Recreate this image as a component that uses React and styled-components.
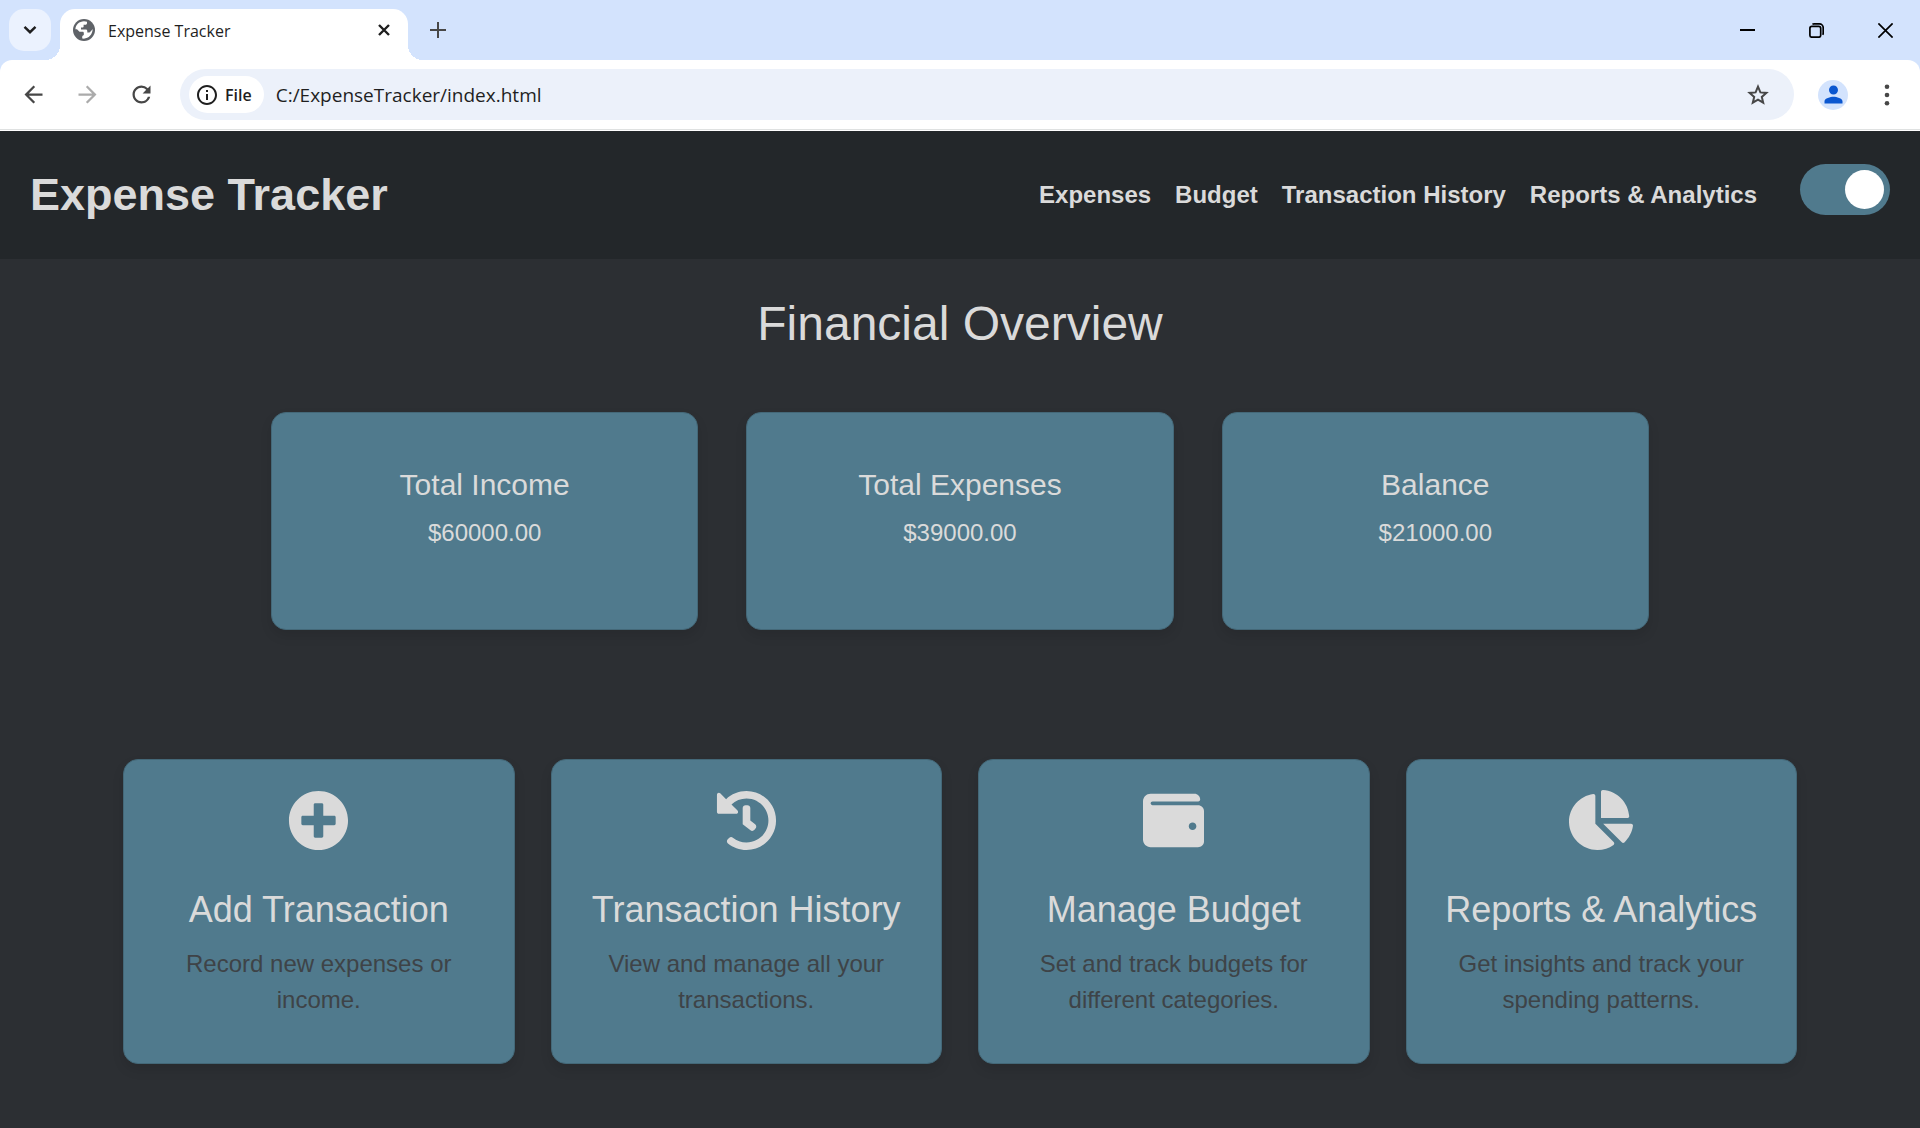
import React, { useState } from "react";
import styled, { createGlobalStyle } from "styled-components";
import { FaPlusCircle, FaHistory, FaWallet, FaChartPie } from "react-icons/fa";
import {
  MdArrowBack,
  MdArrowForward,
  MdRefresh,
  MdOutlineInfo,
  MdPerson,
} from "react-icons/md";

const GlobalStyle = createGlobalStyle`
  *, *::before, *::after { box-sizing: border-box; }
  body {
    margin: 0;
    background: #2c2f33;
    font-family: "Liberation Sans", Arial, sans-serif;
  }
  h1, h2, h3, p { margin: 0; }
`;

const Window = styled.div`
  min-height: 100vh;
  display: flex;
  flex-direction: column;
`;

/* Browser chrome */

const Chrome = styled.div`
  background: #d3e3fd;
  color: #1f1f1f;
  font-family: "Open Sans", "Noto Sans", sans-serif;
`;

const PlainButton = styled.button`
  display: flex;
  align-items: center;
  justify-content: center;
  flex: none;
  padding: 0;
  border: 0;
  background: transparent;
  color: ${(p) => p.$color || "#474747"};
  cursor: pointer;
`;

const TabStrip = styled.div`
  display: flex;
  align-items: center;
  height: 60px;
  padding-left: 9px;
`;

const TabSearch = styled(PlainButton)`
  width: 42px;
  height: 42px;
  border-radius: 15px;
  background: #ebf2fe;
`;

const Tab = styled.div`
  position: relative;
  display: flex;
  align-items: center;
  align-self: flex-end;
  gap: 13px;
  width: 348px;
  height: 51px;
  margin-left: 9px;
  padding: 0 15px 9px 13px;
  border-radius: 15px 15px 0 0;
  background: #fff;

  &::before,
  &::after {
    content: "";
    position: absolute;
    bottom: 0;
    width: 15px;
    height: 15px;
  }
  &::before {
    right: 100%;
    background: radial-gradient(circle at 0 0, transparent 15px, #fff 15px);
  }
  &::after {
    left: 100%;
    background: radial-gradient(circle at 100% 0, transparent 15px, #fff 15px);
  }
`;

const TabTitle = styled.span`
  flex: 1;
  padding-top: 2px;
  font-size: 16px;
  line-height: 24px;
`;

const TabClose = styled(PlainButton)`
  width: 18px;
  height: 24px;
`;

const NewTab = styled(PlainButton)`
  width: 30px;
  height: 42px;
  margin-left: 15px;
`;

const WindowControls = styled.div`
  display: flex;
  margin-left: auto;
`;

const WindowButton = styled(PlainButton)`
  width: 69px;
  height: 60px;
`;

const Toolbar = styled.div`
  display: flex;
  align-items: center;
  height: 71px;
  padding: 0 6px 2px;
  border-radius: 12px 12px 0 0;
  background: linear-gradient(#fff 69px, #dfe1e1 69px, #dfe1e1 70px, #fff 70px);
`;

const ToolButton = styled(PlainButton)`
  width: 54px;
  height: 51px;
`;

const AddressBar = styled.div`
  display: flex;
  align-items: center;
  flex: 1;
  height: 51px;
  margin: 0 12px;
  padding: 0 9px;
  border-radius: 26px;
  background: #ecf1fa;
`;

const SiteChip = styled(PlainButton)`
  gap: 6px;
  height: 37px;
  padding: 0 12px 0 6px;
  border-radius: 19px;
  background: #fff;
  font-family: inherit;
  font-size: 16px;
  font-weight: 600;
`;

const AddressInput = styled.input`
  flex: 1;
  min-width: 0;
  height: 37px;
  padding: 0 12px;
  border: 0;
  outline: 0;
  background: transparent;
  color: #1f1f1f;
  font-family: inherit;
  font-size: 19px;
`;

const Avatar = styled.span`
  display: flex;
  align-items: center;
  justify-content: center;
  width: 30px;
  height: 30px;
  border-radius: 50%;
  background: #d3e3fd;
`;

/* Page */

const Header = styled.header`
  display: flex;
  align-items: center;
  justify-content: space-between;
  min-height: 128px;
  padding: 0 30px;
  background: #23272a;
  color: #dadada;
`;

const Brand = styled.h1`
  font-size: 45px;
  line-height: 54px;
`;

const HeaderEnd = styled.div`
  display: flex;
  align-items: center;
`;

const Nav = styled.nav`
  display: flex;
  gap: 24px;
  margin-right: 43px;
`;

const NavLink = styled.a`
  color: inherit;
  font-size: 24px;
  font-weight: 700;
  line-height: 36px;
  text-decoration: none;
`;

const Switch = styled.input`
  appearance: none;
  width: 90px;
  height: 51px;
  margin: 0 0 12px;
  padding: 6px;
  border-radius: 26px;
  background: ${(p) => (p.checked ? "#507a8d" : "#cccccc")};
  cursor: pointer;

  &::before {
    content: "";
    display: block;
    width: 39px;
    height: 39px;
    margin-left: ${(p) => (p.checked ? "39px" : "0")};
    border-radius: 50%;
    background: #fff;
  }
`;

const Main = styled.main`
  flex: 1;
  padding: 36px 48px 64px;
  color: #dadada;
  text-align: center;
`;

const PageTitle = styled.h2`
  font-size: 48px;
  font-weight: 400;
  line-height: 58px;
`;

const CardRow = styled.section`
  display: grid;
  grid-template-columns: repeat(${(p) => p.$columns}, minmax(0, 1fr));
  gap: ${(p) => p.$gap};
  max-width: ${(p) => p.$max};
  margin: ${(p) => p.$top} auto 0;
`;

const Card = styled.article`
  display: flex;
  flex-direction: column;
  align-items: center;
  border: 1px solid #446878;
  border-radius: 15px;
  background: #507a8d;
  box-shadow: 0 6px 12px rgba(0, 0, 0, 0.1);
`;

const SummaryCard = styled(Card)`
  min-height: 218px;
  padding: 54px 24px 48px;
`;

const SummaryLabel = styled.h3`
  font-size: 30px;
  font-weight: 400;
  line-height: 36px;
`;

const SummaryValue = styled.p`
  margin-top: 12px;
  font-size: 24px;
  line-height: 36px;
`;

const ActionCard = styled(Card)`
  min-height: 305px;
  padding: 28px 24px 43px;
`;

const IconSlot = styled.div`
  display: flex;
  align-items: center;
  height: 64px;

  svg {
    width: auto;
    height: ${(p) => p.$size}px;
  }
`;

const ActionTitle = styled.h3`
  margin-top: 36px;
  font-size: 36px;
  font-weight: 400;
  line-height: 43px;
`;

const ActionText = styled.p`
  max-width: 300px;
  margin-top: 15px;
  color: #3e4347;
  font-size: 24px;
  line-height: 36px;
`;

const GlobeIcon = () => (
  <svg width="22" height="22" viewBox="0 0 22 22" aria-hidden="true">
    <circle cx="11" cy="11" r="11" fill="#5f6368" />
    <path
      d="M2.4 10.2C2.7 5.6 6.3 2.3 11 2.2c1.1 0 2.100.2 3 .5v1.500c0 .9-.7 1.500-1.600 1.500H10.600v1.700c0 .7-.5 1.200-1.200 1.200H8v2h4.800c.9 0 1.500.6 1.500 1.500v1.500h1.500c.7 0 1.400-.6 1.700-1.200.9-.5 1.600-1.400 2.200-2.300C19.400 15.600 15.800 19.400 10.800 19.700c-.6 0-1.100 0-1.600-.1v-1.700c0-.9.7-1.600 1.600-1.600v-2.300c0-.7-.5-1.200-1.200-1.200H6.500L4 10.200Z"
      fill="#fff"
    />
  </svg>
);

const StarIcon = () => (
  <svg width="24" height="24" viewBox="0 0 24 24" fill="none" stroke="currentColor" strokeWidth="2" aria-hidden="true">
    <path d="M12 3.700 14.400 9.400 20.400 9.900 15.800 13.900 17.200 19.700 12 16.600 6.800 19.700 8.200 13.900 3.600 9.900 9.600 9.400Z" />
  </svg>
);

const ChevronIcon = () => (
  <svg width="14" height="10" viewBox="0 0 14 10" fill="none" stroke="#1f1f1f" strokeWidth="2.4" aria-hidden="true">
    <path d="M1.5 1.8 7 7.2 12.5 1.8" />
  </svg>
);

const CloseIcon = () => (
  <svg width="12" height="12" viewBox="0 0 12 12" stroke="#1f1f1f" strokeWidth="2.4" aria-hidden="true">
    <path d="M1 1 11 11M11 1 1 11" />
  </svg>
);

const PlusIcon = () => (
  <svg width="16" height="16" viewBox="0 0 16 16" stroke="#474747" strokeWidth="2" aria-hidden="true">
    <path d="M8 0V16M0 8H16" />
  </svg>
);

const MinimizeIcon = () => (
  <svg width="15" height="15" viewBox="0 0 15 15" aria-hidden="true">
    <path d="M0 6H15V8H0Z" fill="#000" />
  </svg>
);

const RestoreIcon = () => (
  <svg width="15" height="15" viewBox="0 0 15 15" fill="none" stroke="#000" strokeWidth="1.7" aria-hidden="true">
    <rect x="0.9" y="3.4" width="10.8" height="10.8" rx="2" />
    <path d="M3.4 1.2C4 .9 4.4.9 5 .9H10.4A3.8 3.8 0 0 1 14.2 4.7V10C14.2 10.8 14 11.3 13.6 11.8" />
  </svg>
);

const WindowCloseIcon = () => (
  <svg width="15" height="15" viewBox="0 0 15 15" stroke="#000" strokeWidth="1.7" aria-hidden="true">
    <path d="M.4.4 14.6 14.6M14.6.4.4 14.6" />
  </svg>
);

const MoreIcon = () => (
  <svg width="6" height="22" viewBox="0 0 6 22" fill="#474747" aria-hidden="true">
    <circle cx="3" cy="2.7" r="2.3" />
    <circle cx="3" cy="11" r="2.3" />
    <circle cx="3" cy="19.3" r="2.3" />
  </svg>
);

const navLinks = ["Expenses", "Budget", "Transaction History", "Reports & Analytics"];

const summary = [
  { label: "Total Income", value: "$60000.00" },
  { label: "Total Expenses", value: "$39000.00" },
  { label: "Balance", value: "$21000.00" },
];

const actions = [
  { Icon: FaPlusCircle, size: 61, title: "Add Transaction", text: "Record new expenses or income." },
  { Icon: FaHistory, size: 61, title: "Transaction History", text: "View and manage all your transactions." },
  { Icon: FaWallet, size: 61, title: "Manage Budget", text: "Set and track budgets for different categories." },
  { Icon: FaChartPie, size: 64, title: "Reports & Analytics", text: "Get insights and track your spending patterns." },
];

function BrowserChrome() {
  const [address, setAddress] = useState("C:/ExpenseTracker/index.html");
  return (
    <Chrome>
      <TabStrip>
        <TabSearch aria-label="Search tabs"><ChevronIcon /></TabSearch>
        <Tab>
          <GlobeIcon />
          <TabTitle>Expense Tracker</TabTitle>
          <TabClose aria-label="Close tab"><CloseIcon /></TabClose>
        </Tab>
        <NewTab aria-label="New tab"><PlusIcon /></NewTab>
        <WindowControls>
          <WindowButton aria-label="Minimize"><MinimizeIcon /></WindowButton>
          <WindowButton aria-label="Restore"><RestoreIcon /></WindowButton>
          <WindowButton aria-label="Close"><WindowCloseIcon /></WindowButton>
        </WindowControls>
      </TabStrip>
      <Toolbar>
        <ToolButton aria-label="Back"><MdArrowBack size={27} /></ToolButton>
        <ToolButton aria-label="Forward" $color="#ababab"><MdArrowForward size={27} /></ToolButton>
        <ToolButton aria-label="Reload"><MdRefresh size={27} /></ToolButton>
        <AddressBar>
          <SiteChip $color="#1f1f1f"><MdOutlineInfo size={24} />File</SiteChip>
          <AddressInput
            aria-label="Address"
            value={address}
            onChange={(e) => setAddress(e.target.value)}
          />
          <ToolButton aria-label="Bookmark"><StarIcon /></ToolButton>
        </AddressBar>
        <ToolButton aria-label="Profile" $color="#0b57d0">
          <Avatar><MdPerson size={27} /></Avatar>
        </ToolButton>
        <ToolButton aria-label="Menu"><MoreIcon /></ToolButton>
      </Toolbar>
    </Chrome>
  );
}

export default function App() {
  const [dark, setDark] = useState(true);
  return (
    <Window>
      <GlobalStyle />
      <BrowserChrome />
      <Header>
        <Brand>Expense Tracker</Brand>
        <HeaderEnd>
          <Nav>
            {navLinks.map((name) => (
              <NavLink key={name} href="#">{name}</NavLink>
            ))}
          </Nav>
          <Switch
            type="checkbox"
            aria-label="Dark mode"
            checked={dark}
            onChange={(e) => setDark(e.target.checked)}
          />
        </HeaderEnd>
      </Header>
      <Main>
        <PageTitle>Financial Overview</PageTitle>
        <CardRow $columns={3} $gap="48px" $max="1378px" $top="59px">
          {summary.map(({ label, value }) => (
            <SummaryCard key={label}>
              <SummaryLabel>{label}</SummaryLabel>
              <SummaryValue>{value}</SummaryValue>
            </SummaryCard>
          ))}
        </CardRow>
        <CardRow $columns={4} $gap="36px" $max="1674px" $top="129px">
          {actions.map(({ Icon, size, title, text }) => (
            <ActionCard key={title}>
              <IconSlot $size={size}><Icon aria-hidden="true" /></IconSlot>
              <ActionTitle>{title}</ActionTitle>
              <ActionText>{text}</ActionText>
            </ActionCard>
          ))}
        </CardRow>
      </Main>
    </Window>
  );
}
